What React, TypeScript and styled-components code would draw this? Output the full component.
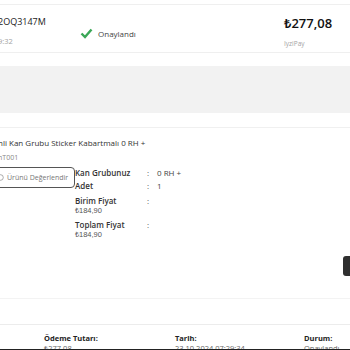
import React from "react";
import styled, { createGlobalStyle } from "styled-components";

const Global = createGlobalStyle`
  html, body {
    margin: 0;
    padding: 0;
    background: #fff;
    font-family: "Open Sans", "Noto Sans", sans-serif;
    color: #222;
  }
  #root {
    width: 350px;
    height: 350px;
    overflow: hidden;
    position: relative;
  }
`;

const Page = styled.div`
  width: 350px;
  height: 350px;
  overflow: hidden;
`;

const OrderCard = styled.div`
  margin-top: 4px;
  height: 47px;
  border-top: 1px solid #efefef;
  border-bottom: 1px solid #efefef;
  display: grid;
  grid-template-columns: 80px 204px 1fr;
  align-items: start;
`;

const OrderInfo = styled.div`
  margin-left: -2px;
  padding-top: 11px;
  display: flex;
  flex-direction: column;
`;

const OrderNo = styled.div`
  font-size: 9px;
  line-height: 12px;
  color: #222;
`;

const Muted = styled.div<{ $size?: number; $gap?: number }>`
  font-size: ${(p) => p.$size ?? 7}px;
  line-height: 10px;
  color: #a3a3a3;
  margin-top: ${(p) => p.$gap ?? 8}px;
`;

const Status = styled.div`
  padding-top: 23px;
  display: flex;
  align-items: center;
  gap: 5px;
  font-size: 8px;
  color: #444;
`;

const Amount = styled.div`
  padding-top: 9px;
  display: flex;
  flex-direction: column;
`;

const Price = styled.div`
  font-size: 13px;
  line-height: 18px;
  font-weight: 600;
  color: #111;
`;

const GrayPanel = styled.div`
  margin-top: 13px;
  height: 47px;
  background: #f2f2f2;
`;

const Divider = styled.div<{ $top: number; $color?: string }>`
  margin-top: ${(p) => p.$top}px;
  border-top: 1px solid ${(p) => p.$color ?? "#f0f0f0"};
`;

const Product = styled.div`
  margin-left: -2px;
  padding-top: 9px;
`;

const Title = styled.div`
  font-size: 8px;
  line-height: 12px;
  color: #333;
`;

const Sku = styled.div`
  font-size: 7px;
  line-height: 10px;
  color: #888;
  margin-top: 4px;
`;

const ItemRow = styled.div`
  display: flex;
  align-items: flex-start;
  margin-top: 4px;
`;

const RateButton = styled.button`
  margin-left: -10px;
  width: 85px;
  height: 21px;
  border: 1px solid #555;
  border-radius: 4px;
  background: #fff;
  font-family: inherit;
  font-size: 7px;
  color: #777;
  display: flex;
  align-items: center;
  gap: 3px;
  padding: 0 0 0 6px;
  white-space: nowrap;
`;

const Details = styled.div`
  display: grid;
  grid-template-columns: 72px 10px auto;
  row-gap: 2px;
  font-size: 8px;
  line-height: 11px;
`;

const Label = styled.div`
  font-weight: 600;
  color: #333;
`;

const Colon = styled.div<{ $gap?: number }>`
  color: #555;
  margin-top: ${(p) => p.$gap ?? 0}px;
`;

const Value = styled.div`
  color: #444;
`;

const PriceCell = styled.div<{ $gap: number }>`
  margin-top: ${(p) => p.$gap}px;
`;

const Sub = styled.div`
  font-size: 7.5px;
  line-height: 9px;
  color: #555;
  font-family: "Liberation Sans", Arial, sans-serif;
`;

const ActionRow = styled.div`
  display: flex;
  justify-content: flex-end;
  margin-top: 17px;
`;

const DarkButton = styled.div`
  width: 10px;
  height: 20px;
  margin-right: -3px;
  background: #2f2f2f;
  border-radius: 3px;
`;

const Summary = styled.div`
  display: grid;
  grid-template-columns: 44px 131px 129px 1fr;
  padding-top: 8px;
  font-size: 7.5px;
  line-height: 10px;
`;

const SumLabel = styled.div`
  font-weight: 700;
  color: #222;
`;

const SumValue = styled.div`
  color: #666;
  font-size: 7.5px;
`;

const BottomBar = styled.div`
  position: absolute;
  left: 0;
  right: 0;
  bottom: 0;
  height: 1px;
  background: #222;
`;

const Check = () => (
  <svg width="13" height="11" viewBox="0 0 13 11">
    <path d="M1.5 5.5 L5 9 L11.5 1.5" fill="none" stroke="#3aa757" strokeWidth="2.4" />
  </svg>
);

const Ring = () => (
  <svg width="7" height="7" viewBox="0 0 10 10">
    <circle cx="5" cy="5" r="4" fill="none" stroke="#888" strokeWidth="1" />
  </svg>
);

export default function App() {
  return (
    <>
      <Global />
      <Page>
        <OrderCard>
          <OrderInfo>
            <OrderNo>2OQ3147M</OrderNo>
            <Muted $size={7.5}>9:32</Muted>
          </OrderInfo>
          <Status>
            <Check />
            <span>Onaylandı</span>
          </Status>
          <Amount>
            <Price>₺277,08</Price>
            <Muted $size={6.5} $gap={7}>IyziPay</Muted>
          </Amount>
        </OrderCard>
        <GrayPanel />
        <Divider $top={14} />
        <Product>
          <Title>nli Kan Grubu Sticker Kabartmalı 0 RH +</Title>
          <Sku>nT001</Sku>
        </Product>
        <ItemRow>
          <RateButton>
            <Ring />
            Ürünü Değerlendir
          </RateButton>
          <Details>
            <Label>Kan Grubunuz</Label>
            <Colon>:</Colon>
            <Value>0 RH +</Value>
            <Label>Adet</Label>
            <Colon>:</Colon>
            <Value>1</Value>
            <PriceCell $gap={2}>
              <Label>Birim Fiyat</Label>
              <Sub>₺184,90</Sub>
            </PriceCell>
            <Colon $gap={2}>:</Colon>
            <Value />
            <PriceCell $gap={2}>
              <Label>Toplam Fiyat</Label>
              <Sub>₺184,90</Sub>
            </PriceCell>
            <Colon $gap={2}>:</Colon>
            <Value />
          </Details>
        </ItemRow>
        <ActionRow>
          <DarkButton />
        </ActionRow>
        <Divider $top={22} $color="#f3f3f3" />
        <Divider $top={25} $color="#ececec" />
        <Summary>
          <div />
          <div>
            <SumLabel>Ödeme Tutarı:</SumLabel>
            <SumValue>₺277,08</SumValue>
          </div>
          <div>
            <SumLabel>Tarih:</SumLabel>
            <SumValue>23.10.2024 07:29:34</SumValue>
          </div>
          <div>
            <SumLabel>Durum:</SumLabel>
            <SumValue>Onaylandı</SumValue>
          </div>
        </Summary>
        <BottomBar />
      </Page>
    </>
  );
}
